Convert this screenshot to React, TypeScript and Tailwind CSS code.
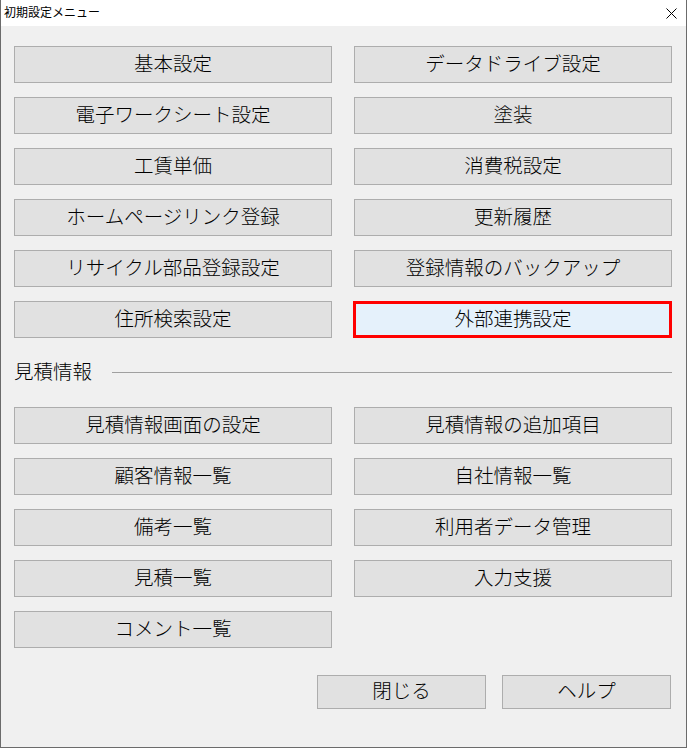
import React from "react";

const font = { fontFamily: '"Noto Sans CJK JP", "Noto Sans", sans-serif' };

const topButtons = [
  "基本設定",
  "データドライブ設定",
  "電子ワークシート設定",
  "塗装",
  "工賃単価",
  "消費税設定",
  "ホームページリンク登録",
  "更新履歴",
  "リサイクル部品登録設定",
  "登録情報のバックアップ",
  "住所検索設定",
  "外部連携設定",
];

const estimateButtons = [
  "見積情報画面の設定",
  "見積情報の追加項目",
  "顧客情報一覧",
  "自社情報一覧",
  "備考一覧",
  "利用者データ管理",
  "見積一覧",
  "入力支援",
  "コメント一覧",
];

function MenuButton({ label, active }: { label: string; active?: boolean }) {
  if (active) {
    return (
      <button className="-ml-px flex h-[37px] items-center justify-center border-[3px] border-[#ff0000] bg-[#e5f1fb] pb-[4px] pl-px text-[19.5px] font-light leading-none text-black">
        {label}
      </button>
    );
  }
  return (
    <button className="flex h-[37px] items-center justify-center border border-[#adadad] bg-[#e1e1e1] pb-[4px] text-[19.5px] font-light leading-none text-black">
      {label}
    </button>
  );
}

export default function App() {
  return (
    <div
      className="flex h-[748px] w-[687px] flex-col border-x border-b border-[#6b6b6b] bg-[#f0f0f0]"
      style={font}
    >
      {/* Title bar */}
      <div className="flex h-[26px] items-center justify-between bg-white pl-[3px] pr-[9px]">
        <span className="pb-[2px] text-[12px] leading-none text-black">初期設定メニュー</span>
        <svg width="11" height="11" viewBox="0 0 11 11" className="mt-[1px]">
          <path d="M0.5 0.5 L10.5 10.5 M10.5 0.5 L0.5 10.5" stroke="#000" strokeWidth="1" />
        </svg>
      </div>

      <div className="flex flex-1 flex-col pl-[13px] pr-[14px] pt-[20px]">
        <div className="grid grid-cols-2 gap-x-[22px] gap-y-[14px]">
          {topButtons.map((b) => (
            <MenuButton key={b} label={b} active={b === "外部連携設定"} />
          ))}
        </div>

        {/* Section header */}
        <div className="flex h-[69px] items-center">
          <span className="pb-[3px] text-[19.5px] font-light leading-none text-black">見積情報</span>
          <div className="ml-[20px] h-px flex-1 bg-[#a0a0a0]" />
        </div>

        <div className="grid grid-cols-2 gap-x-[22px] gap-y-[14px]">
          {estimateButtons.map((b) => (
            <MenuButton key={b} label={b} />
          ))}
        </div>

        <div className="mr-px mt-[27px] flex justify-end gap-[16px]">
          <button className="flex h-[34px] w-[169px] items-center justify-center border border-[#adadad] bg-[#e1e1e1] pb-[4px] text-[19.5px] font-light leading-none text-black">
            閉じる
          </button>
          <button className="flex h-[34px] w-[169px] items-center justify-center border border-[#adadad] bg-[#e1e1e1] pb-[4px] text-[19.5px] font-light leading-none text-black">
            ヘルプ
          </button>
        </div>
      </div>
    </div>
  );
}
